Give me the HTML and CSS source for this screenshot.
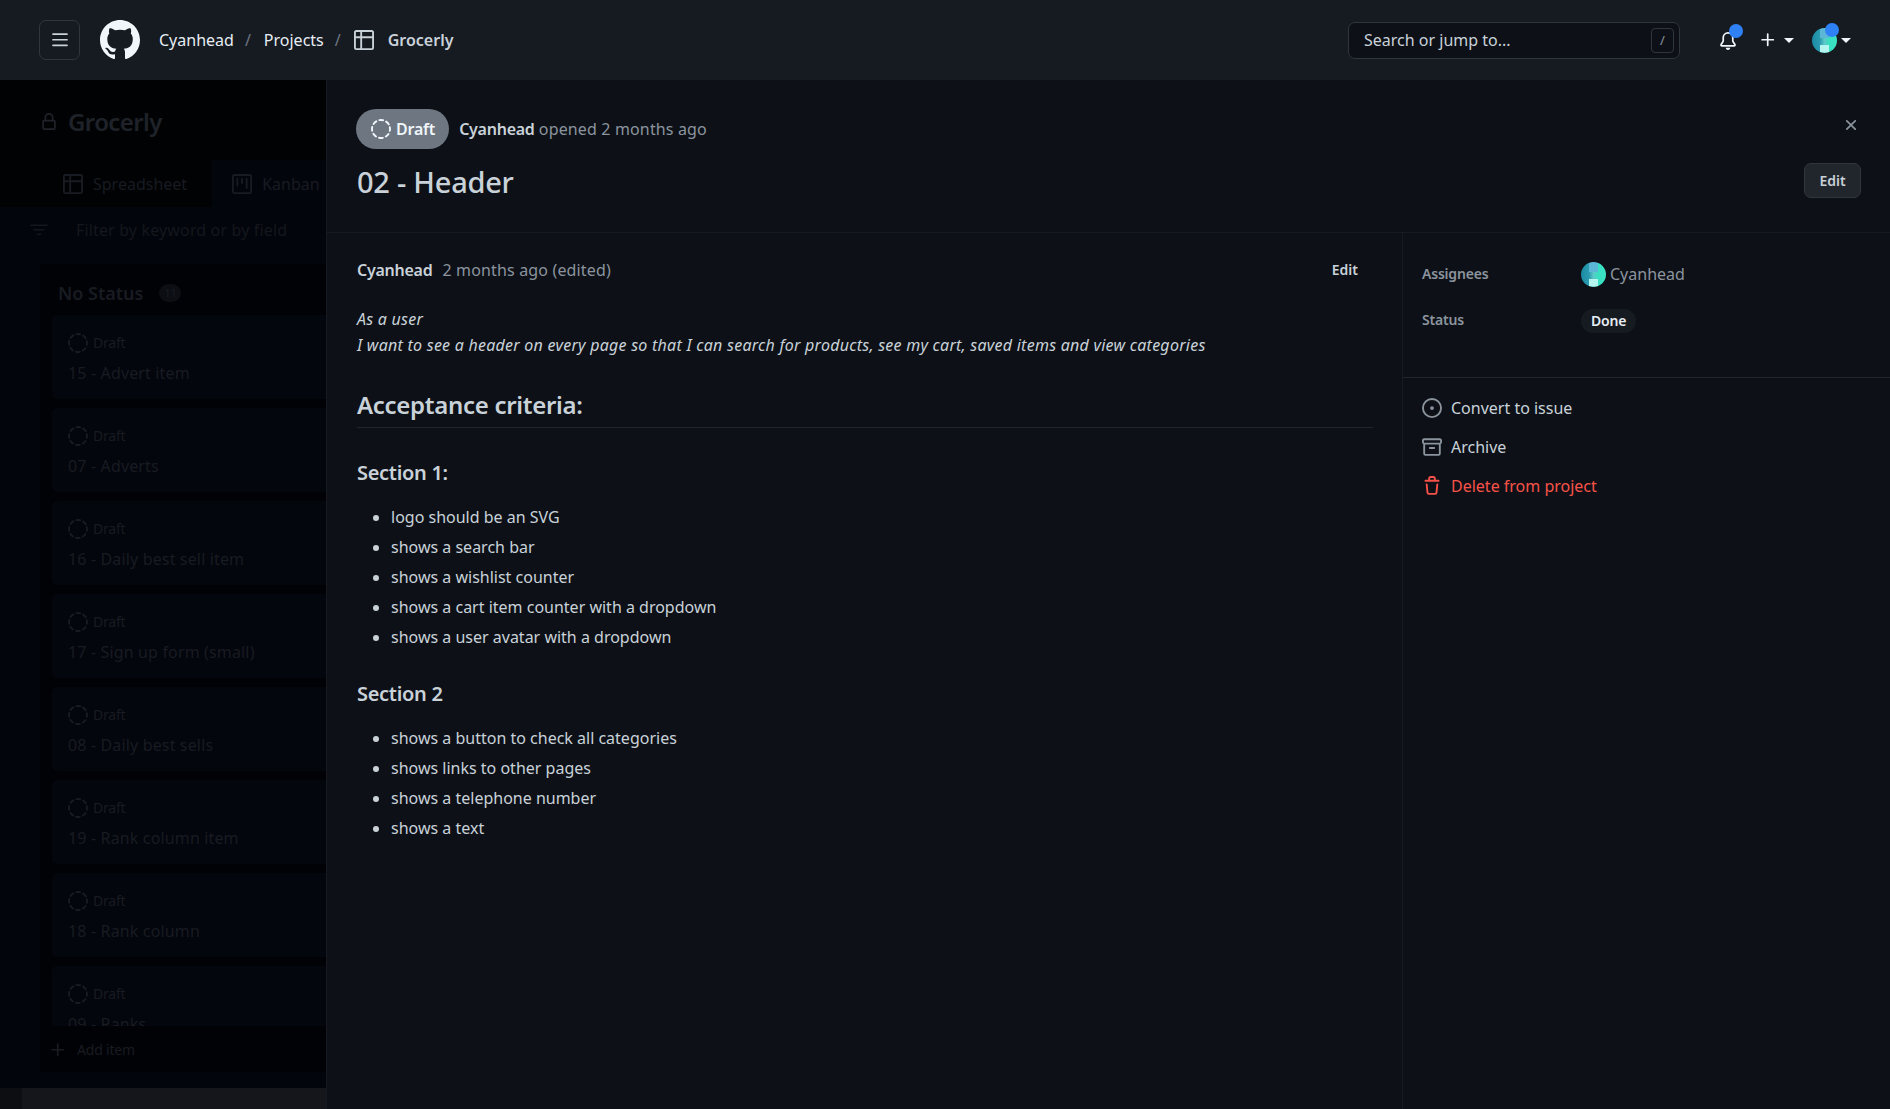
FILE: index.html
```html
<!DOCTYPE html>
<html lang="en">
<head>
    <meta charset="UTF-8">
    <meta name="viewport" content="width=device-width, initial-scale=1.0">
    <title>02 - Header · Grocerly</title>
    <link rel="stylesheet" href="styles.css">
</head>
<body>
    <svg class="icon-defs" width="0" height="0" aria-hidden="true">
        <symbol id="i-bars" viewBox="0 0 16 16"><path d="M1 2.75A.75.75 0 0 1 1.75 2h12.5a.75.75 0 0 1 0 1.5H1.75A.75.75 0 0 1 1 2.75Zm0 5A.75.75 0 0 1 1.75 7h12.5a.75.75 0 0 1 0 1.5H1.75A.75.75 0 0 1 1 7.75ZM1.75 12h12.5a.75.75 0 0 1 0 1.5H1.75a.75.75 0 0 1 0-1.5Z"/></symbol>
        <symbol id="i-github" viewBox="0 0 16 16"><path d="M8 0c4.42 0 8 3.58 8 8a8.013 8.013 0 0 1-5.45 7.59c-.4.08-.55-.17-.55-.38 0-.27.01-1.13.01-2.2 0-.75-.25-1.23-.54-1.48 1.78-.2 3.65-.88 3.65-3.95 0-.88-.31-1.59-.82-2.15.08-.2.36-1.02-.08-2.12 0 0-.67-.22-2.2.82-.64-.18-1.32-.27-2-.27-.68 0-1.36.09-2 .27-1.53-1.03-2.2-.82-2.2-.82-.44 1.1-.16 1.92-.08 2.12-.51.56-.82 1.28-.82 2.15 0 3.06 1.86 3.75 3.64 3.95-.23.2-.44.55-.51 1.07-.46.21-1.61.55-2.33-.66-.15-.24-.6-.83-1.23-.82-.67.01-.27.38.01.53.34.19.73.9.82 1.13.16.45.68 1.31 2.69.94 0 .67.01 1.3.01 1.49 0 .21-.15.45-.55.38A7.995 7.995 0 0 1 0 8c0-4.42 3.58-8 8-8Z"/></symbol>
        <symbol id="i-table" viewBox="0 0 16 16"><path d="M0 1.75C0 .784.784 0 1.75 0h12.5C15.216 0 16 .784 16 1.75v12.5A1.75 1.75 0 0 1 14.25 16H1.75A1.75 1.75 0 0 1 0 14.25ZM6.5 6.5v8h7.75a.25.25 0 0 0 .25-.25V6.5Zm8-1.5V1.75a.25.25 0 0 0-.25-.25H6.5V5Zm-13 1.5v7.75c0 .138.112.25.25.25H5v-8ZM5 5V1.5H1.75a.25.25 0 0 0-.25.25V5Z"/></symbol>
        <symbol id="i-project" viewBox="0 0 16 16"><path d="M0 1.75C0 .784.784 0 1.75 0h12.5C15.216 0 16 .784 16 1.75v12.5A1.75 1.75 0 0 1 14.25 16H1.75A1.75 1.75 0 0 1 0 14.25ZM1.75 1.5a.25.25 0 0 0-.25.25v12.5c0 .138.112.25.25.25h12.5a.25.25 0 0 0 .25-.25V1.75a.25.25 0 0 0-.25-.25ZM11.75 3a.75.75 0 0 1 .75.75v7.5a.75.75 0 0 1-1.5 0v-7.5a.75.75 0 0 1 .75-.75Zm-8.25.75a.75.75 0 0 1 1.5 0v5.5a.75.75 0 0 1-1.5 0ZM8 3a.75.75 0 0 1 .75.75v3.5a.75.75 0 0 1-1.5 0v-3.5A.75.75 0 0 1 8 3Z"/></symbol>
        <symbol id="i-bell" viewBox="0 0 16 16"><path d="M8 16a2 2 0 0 0 1.985-1.75c.017-.137-.097-.25-.235-.25h-3.5c-.138 0-.252.113-.235.25A2 2 0 0 0 8 16ZM3 5a5 5 0 0 1 10 0v2.947c0 .05.015.098.042.139l1.703 2.555A1.519 1.519 0 0 1 13.482 13H2.518a1.516 1.516 0 0 1-1.263-2.36l1.703-2.554A.255.255 0 0 0 3 7.947Zm5-3.5A3.5 3.5 0 0 0 4.5 5v2.947c0 .346-.102.683-.294.97l-1.703 2.556a.017.017 0 0 0-.003.01l.001.006c0 .002.002.004.004.006l.006.004.007.001h10.964l.007-.001.006-.004.004-.006.001-.007a.017.017 0 0 0-.003-.01l-1.703-2.554a1.745 1.745 0 0 1-.294-.97V5A3.5 3.5 0 0 0 8 1.5Z"/></symbol>
        <symbol id="i-plus" viewBox="0 0 16 16"><path d="M7.75 2a.75.75 0 0 1 .75.75V7h4.25a.75.75 0 0 1 0 1.5H8.5v4.25a.75.75 0 0 1-1.5 0V8.5H2.75a.75.75 0 0 1 0-1.5H7V2.75A.75.75 0 0 1 7.75 2Z"/></symbol>
        <symbol id="i-x" viewBox="0 0 16 16"><path d="M3.72 3.72a.75.75 0 0 1 1.06 0L8 6.94l3.22-3.22a.749.749 0 0 1 1.275.326.749.749 0 0 1-.215.734L9.06 8l3.22 3.22a.749.749 0 0 1-.326 1.275.749.749 0 0 1-.734-.215L8 9.06l-3.22 3.22a.751.751 0 0 1-1.042-.018.751.751 0 0 1-.018-1.042L6.94 8 3.72 4.78a.75.75 0 0 1 0-1.06Z"/></symbol>
        <symbol id="i-lock" viewBox="0 0 16 16"><path d="M4 4a4 4 0 0 1 8 0v2h.25c.966 0 1.75.784 1.75 1.75v5.5A1.75 1.75 0 0 1 12.25 15h-8.5A1.75 1.75 0 0 1 2 13.25v-5.5C2 6.784 2.784 6 3.75 6H4Zm8.25 3.5h-8.5a.25.25 0 0 0-.25.25v5.5c0 .138.112.25.25.25h8.5a.25.25 0 0 0 .25-.25v-5.5a.25.25 0 0 0-.25-.25ZM10.5 6V4a2.5 2.5 0 1 0-5 0v2Z"/></symbol>
        <symbol id="i-filter" viewBox="0 0 16 16"><path d="M.75 3h14.5a.75.75 0 0 1 0 1.5H.75a.75.75 0 0 1 0-1.5ZM3 7.75A.75.75 0 0 1 3.75 7h8.5a.75.75 0 0 1 0 1.5h-8.5A.75.75 0 0 1 3 7.75Zm3 4a.75.75 0 0 1 .75-.75h2.5a.75.75 0 0 1 0 1.5h-2.5a.75.75 0 0 1-.75-.75Z"/></symbol>
        <symbol id="i-draft" viewBox="0 0 16 16"><circle cx="8" cy="8" r="7.2" fill="none" stroke="currentColor" stroke-width="1.5" stroke-linecap="round" stroke-dasharray="3 2.65" transform="rotate(-12 8 8)"/></symbol>
        <symbol id="i-issue" viewBox="0 0 16 16"><path d="M8 9.5a1.5 1.5 0 1 0 0-3 1.5 1.5 0 0 0 0 3Z"/><path d="M8 0a8 8 0 1 1 0 16A8 8 0 0 1 8 0ZM1.5 8a6.5 6.5 0 1 0 13 0 6.5 6.5 0 0 0-13 0Z"/></symbol>
        <symbol id="i-archive" viewBox="0 0 16 16"><path d="M0 2.75C0 1.784.784 1 1.75 1h12.5c.966 0 1.75.784 1.75 1.75v1.5A1.75 1.75 0 0 1 15 5.732V13.25A1.75 1.75 0 0 1 13.25 15H2.75A1.75 1.75 0 0 1 1 13.25V5.732A1.75 1.75 0 0 1 0 4.25ZM2.5 6v7.25c0 .138.112.25.25.25h10.5a.25.25 0 0 0 .25-.25V6ZM1.75 2.5a.25.25 0 0 0-.25.25v1.5c0 .138.112.25.25.25h12.5a.25.25 0 0 0 .25-.25v-1.5a.25.25 0 0 0-.25-.25ZM6.25 8h3.5a.75.75 0 0 1 0 1.5h-3.5a.75.75 0 0 1 0-1.5Z"/></symbol>
        <symbol id="i-trash" viewBox="0 0 16 16"><path d="M11 1.75V3h2.25a.75.75 0 0 1 0 1.5H2.75a.75.75 0 0 1 0-1.5H5V1.75C5 .784 5.784 0 6.75 0h2.5C10.216 0 11 .784 11 1.75ZM4.496 6.675l.66 6.6a.25.25 0 0 0 .249.225h5.19a.25.25 0 0 0 .249-.225l.66-6.6a.75.75 0 0 1 1.492.149l-.66 6.6A1.748 1.748 0 0 1 10.595 15h-5.19a1.75 1.75 0 0 1-1.741-1.575l-.66-6.6a.75.75 0 1 1 1.492-.15ZM6.5 1.75V3h3V1.75a.25.25 0 0 0-.25-.25h-2.5a.25.25 0 0 0-.25.25Z"/></symbol>
    </svg>

    <header class="topbar">
        <button class="menu-btn" type="button"><svg class="icon icon-18"><use href="#i-bars"/></svg></button>
        <svg class="logo"><use href="#i-github"/></svg>
        <nav class="crumbs">
            <a>Cyanhead</a><span class="sep">/</span>
            <a>Projects</a><span class="sep">/</span>
            <svg class="icon icon-20 crumb-icon"><use href="#i-table"/></svg>
            <a class="crumb-current">Grocerly</a>
        </nav>
        <div class="search">
            <span>Search or jump to...</span>
            <kbd class="slash">/</kbd>
        </div>
        <div class="top-actions">
            <span class="bell">
                <svg class="icon icon-18"><use href="#i-bell"/></svg>
                <i class="dot"></i>
            </span>
            <span class="new-btn">
                <svg class="icon icon-18"><use href="#i-plus"/></svg>
                <i class="caret"></i>
            </span>
            <span class="user-btn">
                <span class="avatar"></span>
                <i class="dot dot-user"></i>
                <i class="caret"></i>
            </span>
        </div>
    </header>

    <div class="workspace">
        <!-- project board, dimmed behind the side panel -->
        <section class="board">
            <div class="board-top">
                <h2 class="board-name"><svg class="icon icon-18"><use href="#i-lock"/></svg>Grocerly</h2>
                <div class="tabs">
                    <div class="tab"><svg class="icon icon-20"><use href="#i-table"/></svg>Spreadsheet</div>
                    <div class="tab tab-active"><svg class="icon icon-20"><use href="#i-project"/></svg>Kanban</div>
                </div>
                <div class="filter"><svg class="icon icon-18"><use href="#i-filter"/></svg>Filter by keyword or by field</div>
            </div>
            <div class="column">
                <div class="column-head"><span>No Status</span><span class="count">11</span></div>
                <div class="cards">
                    <div class="card"><div class="card-state"><svg class="icon icon-20"><use href="#i-draft"/></svg>Draft</div><div class="card-title">15 - Advert item</div></div>
                    <div class="card"><div class="card-state"><svg class="icon icon-20"><use href="#i-draft"/></svg>Draft</div><div class="card-title">07 - Adverts</div></div>
                    <div class="card"><div class="card-state"><svg class="icon icon-20"><use href="#i-draft"/></svg>Draft</div><div class="card-title">16 - Daily best sell item</div></div>
                    <div class="card"><div class="card-state"><svg class="icon icon-20"><use href="#i-draft"/></svg>Draft</div><div class="card-title">17 - Sign up form (small)</div></div>
                    <div class="card"><div class="card-state"><svg class="icon icon-20"><use href="#i-draft"/></svg>Draft</div><div class="card-title">08 - Daily best sells</div></div>
                    <div class="card"><div class="card-state"><svg class="icon icon-20"><use href="#i-draft"/></svg>Draft</div><div class="card-title">19 - Rank column item</div></div>
                    <div class="card"><div class="card-state"><svg class="icon icon-20"><use href="#i-draft"/></svg>Draft</div><div class="card-title">18 - Rank column</div></div>
                    <div class="card"><div class="card-state"><svg class="icon icon-20"><use href="#i-draft"/></svg>Draft</div><div class="card-title">09 - Ranks</div></div>
                </div>
                <div class="add-item"><svg class="icon icon-18"><use href="#i-plus"/></svg>Add item</div>
            </div>
            <div class="scrollbar"><span class="scroll-btn"></span></div>
        </section>

        <!-- draft issue side panel -->
        <section class="panel">
            <div class="panel-head">
                <div class="panel-title">
                    <div class="panel-meta">
                        <span class="pill"><svg class="icon icon-20"><use href="#i-draft"/></svg>Draft</span>
                        <span><strong>Cyanhead</strong> <span class="muted">opened 2 months ago</span></span>
                    </div>
                    <h1>02 - Header</h1>
                </div>
                <div class="panel-actions">
                    <svg class="icon icon-18 close"><use href="#i-x"/></svg>
                    <button class="edit-btn" type="button">Edit</button>
                </div>
            </div>
            <div class="panel-body">
                <article class="comment">
                    <div class="comment-head">
                        <span><strong>Cyanhead</strong><span class="muted when">2 months ago (edited)</span></span>
                        <span class="comment-edit">Edit</span>
                    </div>
                    <p class="story"><em>As a user<br>I want to see a header on every page so that I can search for products, see my cart, saved items and view categories</em></p>
                    <h2>Acceptance criteria:</h2>
                    <h3>Section 1:</h3>
                    <ul>
                        <li>logo should be an SVG</li>
                        <li>shows a search bar</li>
                        <li>shows a wishlist counter</li>
                        <li>shows a cart item counter with a dropdown</li>
                        <li>shows a user avatar with a dropdown</li>
                    </ul>
                    <h3 class="section-next">Section 2</h3>
                    <ul>
                        <li>shows a button to check all categories</li>
                        <li>shows links to other pages</li>
                        <li>shows a telephone number</li>
                        <li>shows a text</li>
                    </ul>
                </article>
                <aside class="sidebar">
                    <div class="fields">
                        <span class="field-name">Assignees</span>
                        <span class="assignee"><span class="avatar"></span>Cyanhead</span>
                        <span class="field-name">Status</span>
                        <span><span class="status">Done</span></span>
                    </div>
                    <div class="actions">
                        <div class="action"><svg class="icon icon-20 action-icon"><use href="#i-issue"/></svg>Convert to issue</div>
                        <div class="action"><svg class="icon icon-20 action-icon"><use href="#i-archive"/></svg>Archive</div>
                        <div class="action action-danger"><svg class="icon icon-20"><use href="#i-trash"/></svg>Delete from project</div>
                    </div>
                </aside>
            </div>
        </section>
    </div>
</body>
</html>
```

FILE: styles.css
```css
* {
    box-sizing: border-box;
}

body {
    font-family: 'Noto Sans', 'Open Sans', sans-serif;
    font-size: 16px;
    line-height: 24px;
    background-color: #0d1117;
    color: #c9d1d9;
    margin: 0;
    height: 100vh;
    overflow: hidden;
    display: flex;
    flex-direction: column;
}

.icon-defs {
    display: none;
}

.icon {
    fill: currentColor;
    flex-shrink: 0;
}

.icon-18 {
    width: 18px;
    height: 18px;
}

.icon-20 {
    width: 20px;
    height: 20px;
}

strong {
    font-weight: 600;
    letter-spacing: -0.25px;
}

.muted {
    color: #8b949e;
    letter-spacing: 0.15px;
}

/* top bar */
.topbar {
    height: 80px;
    flex-shrink: 0;
    background-color: #161b22;
    display: flex;
    align-items: center;
    padding: 0 39px;
    color: #f0f6fc;
}

.menu-btn {
    width: 41px;
    height: 40px;
    background: none;
    border: 1px solid #30363d;
    border-radius: 7px;
    color: #c9d1d9;
    padding: 0;
    display: flex;
    align-items: center;
    justify-content: center;
}

.logo {
    width: 40px;
    height: 40px;
    fill: #f0f6fc;
    margin-left: 20px;
}

.crumbs {
    display: flex;
    align-items: center;
    margin-left: 19px;
    color: #e6edf3;
}

.sep {
    color: #6e7681;
    margin: 0 13px 0 11px;
}

.crumb-icon {
    color: #c9d1d9;
    margin: 0 14px 0 0;
}

.crumb-current {
    font-weight: 600;
    color: #c9d1d9;
}

.search {
    margin-left: auto;
    width: 332px;
    height: 37px;
    background-color: #0d1117;
    border: 1px solid #30363d;
    border-radius: 7px;
    display: flex;
    align-items: center;
    justify-content: space-between;
    padding: 0 5px 0 15px;
    color: #c9d1d9;
}

.slash {
    width: 23px;
    height: 25px;
    border: 1px solid #30363d;
    border-radius: 4px;
    font-family: inherit;
    font-size: 13px;
    color: #8b949e;
    display: flex;
    align-items: center;
    justify-content: center;
}

.top-actions {
    display: flex;
    align-items: center;
    margin-left: 39px;
}

.bell {
    position: relative;
    display: flex;
    margin-top: 1px;
}

.dot {
    position: absolute;
    right: -6px;
    top: -8px;
    width: 14px;
    height: 14px;
    border-radius: 50%;
    background-color: #2f81f7;
}

.new-btn {
    display: flex;
    align-items: center;
    margin-left: 22px;
}

.caret {
    width: 0;
    height: 0;
    border: 5px solid transparent;
    border-top-color: #f0f6fc;
    border-bottom-width: 0;
    margin-left: 7px;
}

.user-btn {
    position: relative;
    display: flex;
    align-items: center;
    margin-left: 18px;
}

/* identicon, softened the way the screenshot shows it */
.avatar {
    display: inline-block;
    width: 25px;
    height: 25px;
    border-radius: 50%;
    flex-shrink: 0;
    filter: blur(0.5px);
    background:
        linear-gradient(#b4f6ef, #b4f6ef) 50% 100% / 36% 30% no-repeat,
        linear-gradient(#5cb6d6, #5cb6d6) 50% 0 / 36% 40% no-repeat,
        linear-gradient(90deg, #1b8ba3 0, #2a9bb0 32%, #5cc8c8 50%, #37dfc0 68%, #3de2c4 100%);
}

.dot-user {
    right: 12px;
    top: -5px;
}

.user-btn .caret {
    margin-left: 4px;
}

/* board behind the panel */
.workspace {
    flex: 1;
    display: flex;
    min-height: 0;
}

.board {
    width: 326px;
    flex-shrink: 0;
    background-color: #03050c;
    display: flex;
    flex-direction: column;
    overflow: hidden;
    color: #181b21;
    letter-spacing: 0.15px;
}

.board-top {
    height: 184px;
    flex-shrink: 0;
}

.board-name {
    margin: 0;
    height: 80px;
    padding: 24px 0 20px 40px;
    font-size: 24px;
    line-height: 36px;
    font-weight: 600;
    letter-spacing: -0.6px;
    display: flex;
    align-items: center;
    gap: 10px;
    background-color: #010204;
    color: #1f2329;
}

.tabs {
    display: flex;
    height: 47px;
    background-color: #010204;
}

.tab {
    display: flex;
    align-items: center;
    gap: 10px;
    padding: 0 25px 0 63px;
    white-space: nowrap;
    letter-spacing: 0;
}

.tab-active {
    background-color: #03050c;
    padding: 0 20px;
}

.filter {
    display: flex;
    align-items: center;
    gap: 28px;
    padding-left: 30px;
    height: 46px;
    color: #14171d;
}

.column {
    height: 808px;
    flex-shrink: 0;
    margin-left: 40px;
    background-color: #010206;
    display: flex;
    flex-direction: column;
}

.column-head {
    height: 51px;
    flex-shrink: 0;
    padding: 7px 0 0 18px;
    display: flex;
    align-items: center;
    gap: 16px;
    font-size: 18px;
    font-weight: 600;
    letter-spacing: 0;
}

.count {
    width: 22px;
    height: 18px;
    border-radius: 9px;
    background-color: #0c0e13;
    font-size: 11px;
    font-weight: 400;
    display: flex;
    align-items: center;
    justify-content: center;
}

.cards {
    height: 711px;
    flex-shrink: 0;
    overflow: hidden;
    padding-left: 12px;
    display: flex;
    flex-direction: column;
    gap: 9px;
}

.card {
    height: 84px;
    flex-shrink: 0;
    background-color: #04060d;
    padding: 17px 16px 0;
    border-radius: 5px 0 0 5px;
}

.card-state {
    display: flex;
    align-items: center;
    gap: 5px;
    font-size: 14px;
    line-height: 22px;
    letter-spacing: -0.2px;
}

.card-title {
    margin-top: 7px;
    white-space: nowrap;
}

.add-item {
    display: flex;
    align-items: center;
    gap: 10px;
    padding: 2px 0 0 9px;
    height: 46px;
    font-size: 14px;
    letter-spacing: -0.2px;
}

.scrollbar {
    margin-top: auto;
    height: 21px;
    background-color: #14161b;
}

.scroll-btn {
    display: block;
    width: 22px;
    height: 21px;
    background-color: #0d0e12;
}

/* side panel */
.panel {
    flex: 1;
    min-width: 0;
    display: flex;
    flex-direction: column;
    background-color: #0d1117;
    border-left: 1px solid #16191f;
}

.panel-head {
    height: 153px;
    flex-shrink: 0;
    border-bottom: 1px solid #161b22;
    display: flex;
    justify-content: space-between;
    padding: 29px 29px 0 29px;
}

.panel-meta {
    display: flex;
    align-items: center;
    gap: 10px;
}

.pill {
    height: 40px;
    border-radius: 20px;
    background-color: #6e7681;
    color: #f0f6fc;
    font-weight: 600;
    letter-spacing: -0.2px;
    display: flex;
    align-items: center;
    gap: 5px;
    padding: 0 14px 0 15px;
}

.panel-title h1 {
    margin: 14px 0 0 1px;
    font-size: 29px;
    line-height: 38px;
    font-weight: 500;
    letter-spacing: -0.25px;
    color: #c9d1d9;
}

.panel-actions {
    display: flex;
    flex-direction: column;
    align-items: flex-end;
}

.close {
    color: #8b949e;
    margin: 7px 1px 0 0;
}

.edit-btn {
    margin-top: 29px;
    width: 57px;
    height: 35px;
    background-color: #21262d;
    border: 1px solid #30363d;
    border-radius: 7px;
    color: #c9d1d9;
    font-family: inherit;
    font-size: 14px;
    font-weight: 600;
    padding: 0;
}

.panel-body {
    flex: 1;
    display: flex;
    min-height: 0;
}

.comment {
    width: 1075px;
    flex-shrink: 0;
    padding: 25px 29px 0 30px;
}

.comment-head {
    display: flex;
    justify-content: space-between;
    align-items: center;
}

.when {
    margin-left: 10px;
}

.comment-edit {
    font-size: 14px;
    font-weight: 600;
    margin-right: 15px;
}

.story {
    margin: 25px 0 0;
    line-height: 25.5px;
    letter-spacing: 0.25px;
}

.comment h2 {
    margin: 29px 0 0;
    font-size: 24px;
    line-height: 36px;
    font-weight: 600;
    letter-spacing: -0.3px;
    padding-bottom: 4px;
    border-bottom: 1px solid #21262d;
}

.comment h3 {
    margin: 30px 0 0;
    font-size: 20px;
    line-height: 30px;
    font-weight: 600;
    letter-spacing: -0.3px;
}

.comment h3.section-next {
    margin-top: 28px;
}

.comment ul {
    margin: 17px 0 0;
    padding-left: 34px;
}

.comment li {
    line-height: 25.5px;
    margin-bottom: 4.5px;
}

.comment li:last-child {
    margin-bottom: 0;
}

.sidebar {
    flex: 1;
    border-left: 1px solid #161b22;
}

.fields {
    height: 145px;
    display: grid;
    grid-template-columns: 159px 1fr;
    grid-auto-rows: 46px;
    align-items: center;
    padding: 18px 19px 0;
    border-bottom: 1px solid #21262d;
}

.field-name {
    font-size: 14px;
    font-weight: 600;
    letter-spacing: -0.2px;
    color: #8b949e;
}

.assignee {
    display: flex;
    align-items: center;
    gap: 4px;
    color: #8b949e;
}

.status {
    display: inline-block;
    height: 24px;
    line-height: 24px;
    padding: 0 10px;
    border-radius: 12px;
    background-color: #161b22;
    color: #e6edf3;
    font-size: 14px;
    font-weight: 600;
    letter-spacing: -0.2px;
}

.actions {
    padding: 10px 19px 0;
}

.action {
    display: flex;
    align-items: center;
    gap: 9px;
    height: 39px;
}

.action-icon {
    color: #8b949e;
}

.action-danger {
    color: #f85149;
}
```
